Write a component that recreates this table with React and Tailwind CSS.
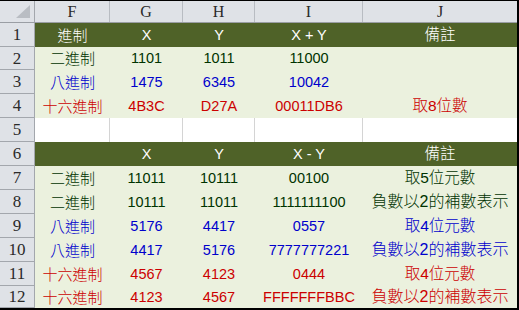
import React from "react";

const G = "text-[#003300]";
const B = "text-[#0000cc]";
const R = "text-[#cc0000]";

const widths = ["w-[75px]", "w-[73px]", "w-[72px]", "w-[108px]", "w-[154px]"];
const heights = ["h-[24px]", "h-[23px]", "h-[24px]", "h-[24px]", "h-[24px]", "h-[24px]", "h-[24px]", "h-[24px]", "h-[24px]", "h-[24px]", "h-[24px]", "h-[22px]"];

const rows = [
  { type: "head", cells: ["進制", "X", "Y", "X + Y", "備註"] },
  { type: "data", color: G, cells: ["二進制", "1101", "1011", "11000", ""] },
  { type: "data", color: B, cells: ["八進制", "1475", "6345", "10042", ""] },
  { type: "data", color: R, cells: ["十六進制", "4B3C", "D27A", "00011DB6", "取8位數"] },
  { type: "blank", cells: ["", "", "", "", ""] },
  { type: "head", cells: ["", "X", "Y", "X - Y", "備註"] },
  { type: "data", color: G, cells: ["二進制", "11011", "10111", "00100", "取5位元數"] },
  { type: "data", color: G, cells: ["二進制", "10111", "11011", "1111111100", "負數以2的補數表示"] },
  { type: "data", color: B, cells: ["八進制", "5176", "4417", "0557", "取4位元數"] },
  { type: "data", color: B, cells: ["八進制", "4417", "5176", "7777777221", "負數以2的補數表示"] },
  { type: "data", color: R, cells: ["十六進制", "4567", "4123", "0444", "取4位元數"] },
  { type: "data", color: R, cells: ["十六進制", "4123", "4567", "FFFFFFFBBC", "負數以2的補數表示"] },
];

const isCJK = (s) => /[\u3400-\u9fff]/.test(s);

function sizeFor(c, ci) {
  if (!isCJK(c)) return "text-[14.5px]";
  if (ci === 0) return "text-[15px] font-light";
  if (c.length > 6) return "text-[16px] font-light";
  return "text-[15.5px] font-light";
}

export default function App() {
  return (
    <div
      className="w-[519px] h-[310px] bg-white border-t border-r-2 border-b-2 border-black overflow-hidden"
      style={{ fontFamily: '"Liberation Sans", "Noto Sans CJK TC", sans-serif' }}
    >
      {/* column header */}
      <div className="flex h-[22px] bg-[#dfe2e7] border-b border-[#9a9ea4]">
        <div className="w-[35px] border-r border-[#a3a7ad] flex items-end justify-end pr-[4px] pb-[4px]">
          <svg width="14" height="13" viewBox="0 0 14 13">
            <polygon points="14,0 14,13 0,13" fill="#b9bdc3" />
          </svg>
        </div>
        {["F", "G", "H", "I", "J"].map((l, i) => (
          <div
            key={l}
            className={`${widths[i]} ${i < 4 ? "border-r border-[#b8bcc2]" : ""} flex items-center justify-center text-[16px] text-[#2a2a2a]`}
            style={{ fontFamily: '"Liberation Serif", serif' }}
          >
            {l}
          </div>
        ))}
      </div>
      {rows.map((row, ri) => {
        const bg =
          row.type === "head"
            ? "bg-[#4f6228] text-white"
            : row.type === "blank"
            ? "bg-white"
            : `bg-[#ebf1de] ${row.color}`;
        return (
          <div key={ri} className={`flex ${heights[ri]}`}>
            <div
              className="w-[35px] shrink-0 bg-[#dfe2e7] border-r border-b border-[#a3a7ad] flex items-center justify-center text-[17px] text-[#2a2a2a] leading-none"
              style={{ fontFamily: '"Liberation Serif", serif' }}
            >
              {ri + 1}
            </div>
            {row.cells.map((c, ci) => (
              <div
                key={ci}
                className={`${widths[ci]} shrink-0 ${bg} ${
                  row.type === "blank" && ci < 4 ? "border-r border-[#d4d4d4]" : ""
                } flex items-center justify-center whitespace-nowrap leading-none ${sizeFor(c, ci)}`}
              >
                {c}
              </div>
            ))}
          </div>
        );
      })}
    </div>
  );
}
